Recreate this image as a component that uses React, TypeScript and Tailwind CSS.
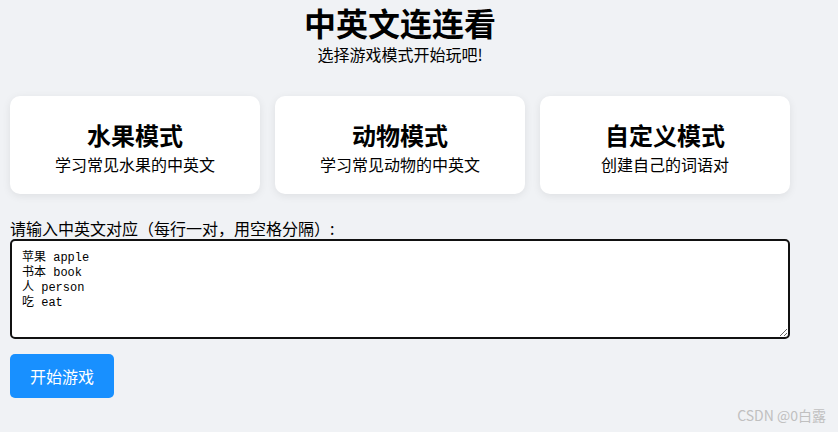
import React, { useState } from 'react'

const modes = [
  { title: '水果模式', desc: '学习常见水果的中英文' },
  { title: '动物模式', desc: '学习常见动物的中英文' },
  { title: '自定义模式', desc: '创建自己的词语对' },
]

const defaultPairs = '苹果 apple\n书本 book\n人 person\n吃 eat'

const App = () => {
  const [pairs, setPairs] = useState(defaultPairs)
  return (
    <div className="min-h-[432px] bg-[#f0f2f5] px-[10px] text-black font-['Noto_Sans_CJK_SC',sans-serif] relative">
      <div className="w-[780px]">
        <div className="flex flex-col items-center pt-[1px]">
          <h1 className="text-[32px] font-bold leading-[42px]">中英文连连看</h1>
          <p className="text-[16px] leading-[22px]">选择游戏模式开始玩吧!</p>
        </div>
        <div className="flex gap-[15px] mt-[31px]">
          {modes.map((m) => (
            <div
              key={m.title}
              className="w-[250px] h-[98px] bg-white rounded-[10px] shadow-[0_2px_8px_rgba(0,0,0,0.08)] flex flex-col items-center pt-[24px] gap-[2px] cursor-pointer"
            >
              <h2 className="text-[24px] font-bold leading-[30px]">{m.title}</h2>
              <p className="text-[16px] leading-[24px]">{m.desc}</p>
            </div>
          ))}
        </div>
        <div className="mt-[23px]">
          <label className="block text-[16px] leading-[22px]">请输入中英文对应（每行一对，用空格分隔）:</label>
          <textarea
            value={pairs}
            onChange={(e) => setPairs(e.target.value)}
            className="block w-[780px] h-[100px] border-2 border-[#111] rounded-[5px] bg-white px-[10px] pt-[10px] text-[12px] leading-[15px] font-['Liberation_Mono','Noto_Sans_CJK_SC',monospace] outline-none"
          />
        </div>
        <button className="mt-[15px] h-[44px] px-[20px] bg-[#1890ff] text-white text-[16px] rounded-[5px]">
          开始游戏
        </button>
      </div>
      <div className="absolute right-[12px] bottom-[6px] text-[14px] text-[#c0c0c0]">CSDN @0白露</div>
    </div>
  )
}

export default App
